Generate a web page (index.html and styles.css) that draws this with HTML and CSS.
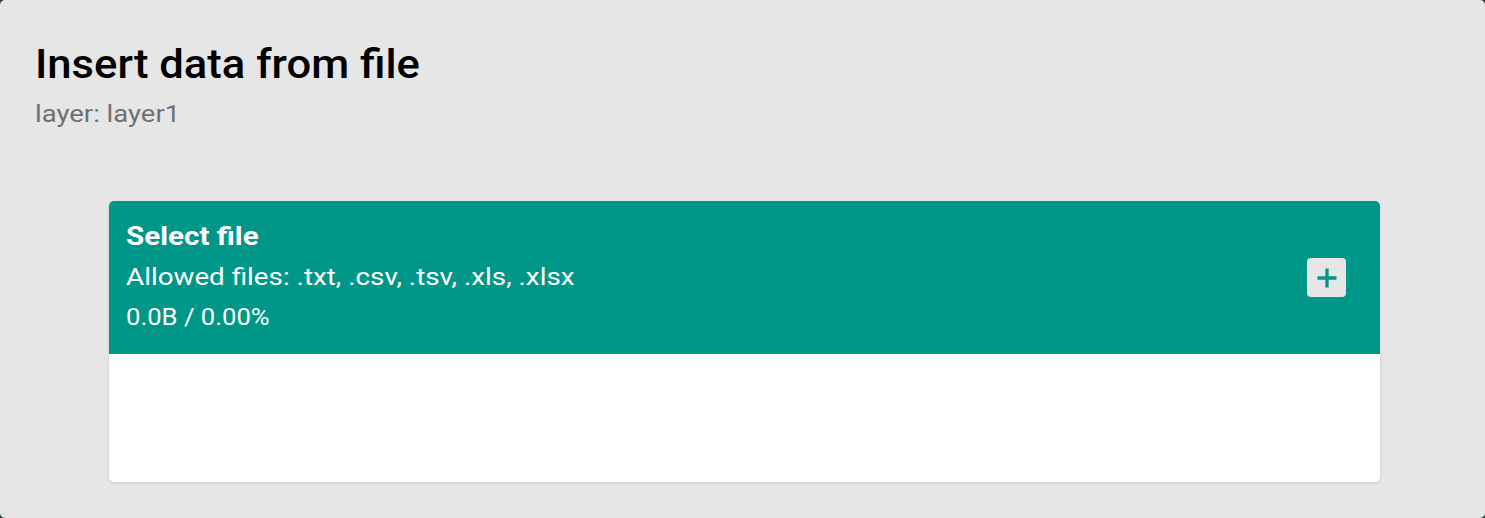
FILE: index.html
```html
<!DOCTYPE html>
<html>
<head>
<meta charset="utf-8">
<link rel="stylesheet" href="styles.css">
</head>
<body>
<div class="dialog">
  <h1 class="title">Insert data from file</h1>
  <div class="subtitle">layer: layer1</div>
  <div class="card">
    <div class="card-header">
      <div class="info">
        <div class="card-title">Select file</div>
        <div class="card-lines">
          <div class="card-line allowed">Allowed files: .txt, .csv, .tsv, .xls, .xlsx</div>
          <div class="card-line progress">0.0B / 0.00%</div>
        </div>
      </div>
      <button class="add-btn" aria-label="Add file">
        <svg width="22" height="22" viewBox="0 0 22 22"><path d="M11 1.5v19M1.5 11h19" stroke="#009688" stroke-width="3.3" fill="none"/></svg>
      </button>
    </div>
    <div class="card-body"></div>
  </div>
</div>
</body>
</html>
```
FILE: styles.css
```css
html, body {
  margin: 0;
  padding: 0;
  height: 100%;
  background: #2f3b38;
  overflow: hidden;
}
body {
  font-family: Roboto, "Noto Sans", sans-serif;
}
.dialog {
  box-sizing: border-box;
  height: 518px;
  background: #e6e6e6;
  border-radius: 5px;
  padding: 42px 105px 0 35px;
  overflow: hidden;
}
.title {
  margin: 0;
  width: max-content;
  font-size: 40px;
  font-weight: 500;
  line-height: 46px;
  color: #000;
  transform: scaleX(1.09);
  transform-origin: left center;
}
.subtitle {
  margin-top: 14px;
  width: max-content;
  font-size: 24px;
  line-height: 24px;
  color: #707070;
  transform: scaleX(1.145);
  transform-origin: left center;
}
.card {
  margin: 75px 0 0 74px;
  background: #fff;
  border-radius: 5px;
  overflow: hidden;
  box-shadow: 0 1px 3px rgba(0,0,0,0.14);
}
.card-header {
  background: #009688;
  height: 153px;
  box-sizing: border-box;
  padding: 17px 34px 0 17px;
  display: flex;
  justify-content: space-between;
  color: #fff;
}
.info {
  flex: 1;
}
.card-title {
  width: max-content;
  font-size: 26px;
  font-weight: 700;
  line-height: 36px;
  transform: scaleX(1.138);
  transform-origin: left center;
}
.card-lines {
  margin-top: 3px;
}
.card-line {
  width: max-content;
  font-size: 24px;
  line-height: 40px;
  transform-origin: left center;
}
.allowed {
  transform: scaleX(1.158);
}
.progress {
  transform: scaleX(1.068);
}
.add-btn {
  align-self: center;
  flex: none;
  width: 39px;
  height: 39px;
  border: none;
  border-radius: 4px;
  background: #e6e6e6;
  display: flex;
  align-items: center;
  justify-content: center;
  padding: 0;
  margin-top: -17px;
}
.card-body {
  height: 128px;
}
```
